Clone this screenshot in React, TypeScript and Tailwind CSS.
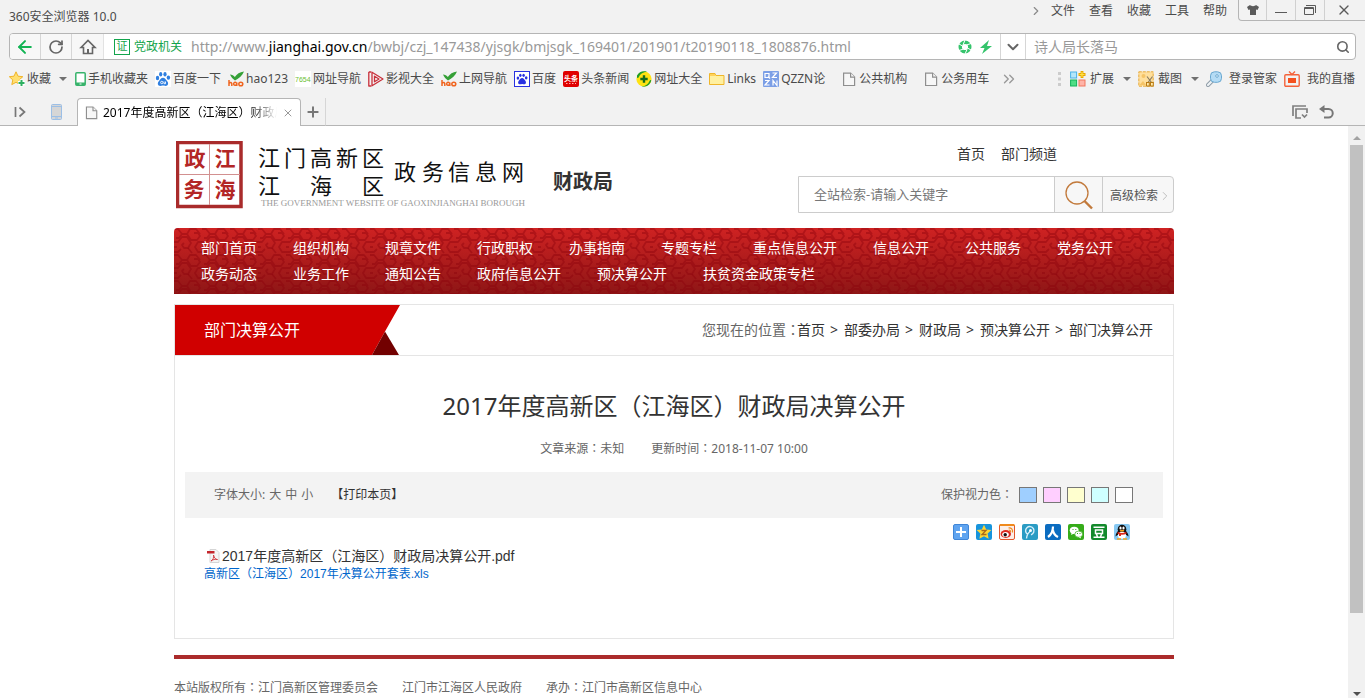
import React from "react";
import {
  ArrowLeft,
  ChevronDown,
  ChevronRight,
  ChevronsRight,
  Plus,
  RotateCw,
  Search,
  X,
} from "lucide-react";

type IconProps = { className?: string };

/* Full-width brackets and colons are centred in their cell, as in the TC face. */
function Cjk({ children }: { children: string }) {
  return (
    <>
      {children.split(/([（）：])/).map((part, i) =>
        i % 2 === 1 ? (
          <span key={i} lang="zh-TW" className="font-['Noto_Sans_CJK_TC',sans-serif] leading-none">{part}</span>
        ) : (
          part
        ),
      )}
    </>
  );
}

/* ---------- browser icons ---------- */

const DocIcon = ({ className = "h-4 w-4" }: IconProps) => (
  <svg viewBox="0 0 16 16" className={className} fill="#f7f7f7" stroke="#8f8f8f" strokeWidth="1.2">
    <path d="M2.6 2.1h7l4 4v8.4h-11z" />
    <path d="M9.6 2.1v4h4" />
  </svg>
);

const HomeIcon = () => (
  <svg viewBox="0 0 18 18" className="h-[18px] w-[18px]" fill="none" stroke="#666" strokeWidth="1.6">
    <path d="M2 9.500 9 2.500l7 7h-2.500V15.500h-9V9.500z" strokeLinejoin="miter" />
    <path d="M9 11v4" strokeWidth="2" />
  </svg>
);

const StarIcon = () => (
  <svg viewBox="0 0 16 16" className="h-4 w-4">
    <path d="m7 .8 2 4.400 4.800.5-3.600 3.200 1 4.700L7 11.300l-4.200 2.300 1-4.700L.3 5.700 5 5.200z" fill="#ffdf70" stroke="#f0b428" />
    <path d="M12.500 8.500v7M9 12h7" stroke="#fff" strokeWidth="4" />
    <path d="M12.500 9v6M9.500 12h6" stroke="#2eb062" strokeWidth="2" />
  </svg>
);

const PhoneIcon = () => (
  <svg viewBox="0 0 11 16" className="h-4 w-[11px]">
    <rect x=".8" y="1.800" width="9.400" height="12.500" rx="1" fill="#fff" stroke="#37b36b" strokeWidth="1.500" />
    <path d="M1 11.500h9V14H1z" fill="#37b36b" />
    <path d="M4.500 13h2" stroke="#fff" />
  </svg>
);

const Paw = () => (
  <>
    <ellipse cx="2.500" cy="7" rx="1.700" ry="2.200" />
    <ellipse cx="5.700" cy="3.300" rx="1.600" ry="2.200" />
    <ellipse cx="10" cy="3.300" rx="1.600" ry="2.200" />
    <ellipse cx="13.400" cy="6.600" rx="1.700" ry="2.200" />
    <path d="M8 6.800c2 0 2.500 1.800 4 3.200 1.800 1.700 1.500 5-1.500 5-1.200 0-1.500-.4-2.500-.4s-1.500.4-2.600.4c-3 0-3.200-3.300-1.400-5 1.500-1.400 2-3.200 4-3.200z" />
  </>
);

const BaiduIcon = () => (
  <svg viewBox="0 0 16 16" className="h-4 w-4" fill="#2f7fe0">
    <path d="M0 0h16v16H0z" fill="#fff" />
    <Paw />
    <circle cx="6.800" cy="11.500" r="1.200" fill="none" stroke="#fff" strokeWidth=".9" />
    <path d="M9 10.500v2.200h1.500v-2.200" fill="none" stroke="#fff" strokeWidth=".9" />
  </svg>
);

const BaiduBoxIcon = () => (
  <svg viewBox="0 0 16 16" className="h-4 w-4" fill="#2932e1">
    <rect x=".5" y=".5" width="15" height="15" fill="#fff" stroke="#2932e1" />
    <g transform="translate(2 1.800) scale(.76)">
      <Paw />
    </g>
  </svg>
);

const HaoIcon = () => (
  <svg viewBox="0 0 16 16" className="h-4 w-4">
    <path d="M2 3.500c2 0 3.800 1 4.800 2.500C9 3 11.500 1 16 .5 14.500 4.500 11 7.500 7 9.500 5 8 3 6 2 3.500z" fill="#35a037" />
    <path d="M1 9v6M1 12.200q2.500-1.800 2.800.6V15M8.800 11.500v3.500M8.600 13.200a1.500 1.500 0 1 0-2.900 0 1.500 1.500 0 0 0 2.900 0M14.800 13a2 1.800 0 1 0-4 0 2 1.800 0 0 0 4 0" fill="none" stroke="#f0641e" strokeWidth="1.500" />
  </svg>
);

const NumIcon = () => (
  <svg viewBox="0 0 16 16" className="h-4 w-4">
    <path d="M0 0h16v16H0z" fill="#fff" />
    <text x="0" y="11" fontSize="7" fontFamily="Liberation Sans, sans-serif" fill="#6cc030">7654</text>
  </svg>
);

const PlayIcon = () => (
  <svg viewBox="0 0 16 16" className="h-4 w-4" fill="none" stroke="#c9303b" strokeWidth="1.300" strokeLinejoin="round">
    <path d="M.8 1v14h2.500M.8 1h2.500" />
    <path d="M4 1.200 15 8 4 14.800z" />
    <path d="M6.500 5.200v5.600L11 8z" />
  </svg>
);

const ToutiaoIcon = () => (
  <svg viewBox="0 0 16 16" className="h-4 w-4">
    <rect width="16" height="16" rx="2" fill="#e00000" />
    <text x="1" y="9.500" fontSize="7" fontWeight="700" fontFamily="Noto Sans CJK SC, sans-serif" fill="#fff">头条</text>
    <path d="M3 12.500h10" stroke="#ffb0b0" strokeDasharray="1.500 1.500" />
  </svg>
);

const SafeIcon = () => (
  <svg viewBox="0 0 16 16" className="h-4 w-4">
    <circle cx="8" cy="8" r="7.600" fill="#ffe312" />
    <path d="M1 4.500C3 1 7-.5 11 .8 7.500 1 4 3 2.500 6.500 2 7.500.8 7.500 1 4.500zM15.200 9.500c-.8 4-5 7-9.500 6 4-.3 6.500-2.200 7.800-5.500.5-1 1.500-1.500 1.700-.5z" fill="#1e9c28" />
    <path d="M8 4.300v7.400M4.300 8h7.400" stroke="#146b1c" strokeWidth="2.400" />
  </svg>
);

const FolderIcon = () => (
  <svg viewBox="0 0 16 16" className="h-4 w-4">
    <path d="M.5 13.500v-11h5.500l1 2h8v9z" fill="#fff0a0" stroke="#efb62a" />
    <path d="M1 3h5l1 2H1z" fill="#ffd25a" />
  </svg>
);

const QzznIcon = () => (
  <svg viewBox="0 0 16 16" className="h-4 w-4">
    <rect width="16" height="16" rx="1" fill="#7c9fe6" />
    <path d="M2 2.500h4v4H2zM5 5.500l2 2M9.500 2h4l-4 4.500h4.500M2 9.500h4l-4 4.500h4.500M10 14.500V9.500l4 5V9.500" fill="none" stroke="#fff" strokeWidth="1.200" />
  </svg>
);

const ExtIcon = () => (
  <svg viewBox="0 0 16 16" className="h-4 w-4">
    <rect x=".6" y="1" width="6" height="6" fill="#b4e6fa" stroke="#49b2e8" />
    <rect x=".6" y="9" width="6" height="6" fill="#50dd85" stroke="#12b35a" />
    <rect x="9" y="9" width="6" height="6" fill="#ffb4a8" stroke="#f0765e" />
    <path d="M12 0v7M8.500 3.500h7" stroke="#e9a800" strokeWidth="2.800" />
    <path d="M12 1v5M9.500 3.500h5" stroke="#ffe24a" strokeWidth="1.200" />
  </svg>
);

const ShotIcon = () => (
  <svg viewBox="0 0 16 16" className="h-4 w-4">
    <path d="M.8.800h14.400v14.400H.8z" fill="#ffdf9c" stroke="#e8ac3c" strokeDasharray="3 1" />
    <circle cx="5.500" cy="5" r="2" fill="#f5c468" />
    <path d="M1.500 14l3.500-4 3 4z" fill="#f5c468" />
    <path d="M9 5.500l4.500 6M14.500 5.500l-4.500 6" stroke="#8c7d60" strokeWidth="1.200" />
    <rect x="8.500" y="11.500" width="2.800" height="3.500" fill="#ffe9ac" stroke="#b87a12" />
    <rect x="12.500" y="11.500" width="2.800" height="3.500" fill="#ffe9ac" stroke="#b87a12" />
  </svg>
);

const KeyIcon = () => (
  <svg viewBox="0 0 16 16" className="h-4 w-4">
    <path d="M7 9 2 14" stroke="#8d9aa5" strokeWidth="4" strokeLinecap="round" />
    <path d="M7 9 2 14" stroke="#eef2f5" strokeWidth="2.200" strokeLinecap="round" />
    <rect x="4.500" y=".8" width="11" height="10.500" rx="4" fill="#b5dcf5" stroke="#6aa8d0" />
    <circle cx="11" cy="5" r="1.300" fill="#fff" stroke="#6aa8d0" />
  </svg>
);

const LiveIcon = () => (
  <svg viewBox="0 0 16 16" className="h-4 w-4" fill="none" stroke="#f4623a" strokeWidth="1.400">
    <path d="M5 .5 8 3.500l3-3" />
    <rect x=".8" y="3.700" width="14.400" height="11.500" rx="1" />
    <path d="M4 7h8v5H4z" fill="#f4511e" stroke="none" />
  </svg>
);

const Caret = () => (
  <svg viewBox="0 0 8 4" className="h-1 w-2" fill="#707070">
    <path d="M0 0h8L4 4z" />
  </svg>
);

/* ---------- share icons ---------- */

const shareIcons: { name: string; art: React.ReactNode }[] = [
  {
    name: "更多分享",
    art: (
      <>
        <rect x=".5" y=".5" width="15" height="15" rx="1.500" fill="#5fa4f0" stroke="#3f86d8" />
        <path d="M8 3v10M3 8h10" stroke="#fff" strokeWidth="2" />
      </>
    ),
  },
  {
    name: "QQ空间",
    art: (
      <>
        <rect width="16" height="16" rx="2" fill="#1794dc" />
        <path d="m8 .8 2.200 4.700 5.200.6-3.800 3.500 1 5.200L8 12.300l-4.600 2.500 1-5.200L.6 6.100l5.200-.6z" fill="#ffd633" />
        <path d="M5.500 6.500H10l-4 4h4.500" fill="none" stroke="#a8691a" strokeWidth="1.300" />
      </>
    ),
  },
  {
    name: "新浪微博",
    art: (
      <>
        <rect x=".5" y=".5" width="15" height="15" rx="1.500" fill="#fbeee8" stroke="#e2572c" />
        <path d="M0 2a2 2 0 0 1 2-2h12a2 2 0 0 1 2 2H0z" fill="#f08a1c" />
        <ellipse cx="6.800" cy="10" rx="5.200" ry="3.900" fill="#dd2a20" />
        <ellipse cx="6.500" cy="10.500" rx="3.300" ry="2.500" fill="#fff" />
        <circle cx="6.200" cy="10.700" r="1.700" fill="#111" />
        <path d="M9.500 4c2.800-.5 4.500 1.500 4 4.500M9.800 6c1.300 0 2 .8 1.700 2" fill="none" stroke="#f08a1c" strokeWidth="1.200" />
      </>
    ),
  },
  {
    name: "腾讯微博",
    art: (
      <>
        <rect width="16" height="16" rx="2" fill="#2b9cc4" />
        <path d="M5.500 10.300A4.200 4.200 0 1 1 9 10.800M4.500 14.500c.3-3.500 1.500-5.500 3.800-7.200" fill="none" stroke="#d8f0fa" strokeWidth="1.400" />
        <circle cx="8.500" cy="6.600" r="1.500" fill="#fff" />
      </>
    ),
  },
  {
    name: "人人网",
    art: (
      <>
        <rect width="16" height="16" rx="2" fill="#0b6cc0" />
        <path d="M8 2.500c0 5-1.500 8-5 10.500M8 6.500c.5 3 2 5 5 6.500" fill="none" stroke="#fff" strokeWidth="2.200" />
      </>
    ),
  },
  {
    name: "微信",
    art: (
      <>
        <rect width="16" height="16" rx="2" fill="#35ac19" />
        <ellipse cx="6.200" cy="6.300" rx="4.400" ry="3.600" fill="#fff" />
        <ellipse cx="10.700" cy="10.200" rx="3.900" ry="3.100" fill="#fff" stroke="#35ac19" strokeWidth=".7" />
        <path d="M3 11l1-3 2 1.500zM13 14.500l-.5-2-2 .5z" fill="#fff" />
        <path d="M4.500 5.500h1M7.300 5.500h1M9 9.500h1M11.500 9.500h1" stroke="#35ac19" strokeWidth="1" />
      </>
    ),
  },
  {
    name: "豆瓣",
    art: (
      <>
        <rect width="16" height="16" rx="2" fill="#138a2c" />
        <path d="M2.500 3.200h11M4.500 6h7v3.500h-7zM5.500 10l1 3M10.500 10l-1 3M2.500 13.300h11" fill="none" stroke="#fff" strokeWidth="1.500" />
      </>
    ),
  },
  {
    name: "QQ好友",
    art: (
      <>
        <rect width="16" height="16" rx="2" fill="#86c8f2" />
        <path d="M1.500 12.500c0-2.500 1.500-4.500 2.500-5.500h8c1 1 2.500 3 2.500 5.500L12.500 11h-9z" fill="#111" />
        <ellipse cx="8" cy="5.300" rx="4.300" ry="4.600" fill="#111" />
        <ellipse cx="8" cy="11.200" rx="4" ry="3.500" fill="#fff" />
        <path d="M3.600 7.800c2.600 1.600 6.200 1.600 8.800 0v2c-2.600 1.200-6.200 1.200-8.800 0z" fill="#e02818" />
        <path d="M5 9.500h2v2.500H5z" fill="#e02818" />
        <ellipse cx="6.500" cy="4" rx="1.100" ry="1.500" fill="#fff" />
        <ellipse cx="9.500" cy="4" rx="1.100" ry="1.500" fill="#fff" />
        <ellipse cx="8" cy="6.700" rx="2.300" ry=".9" fill="#f8a51c" />
        <path d="M3 15h4M9 15h4" stroke="#f8a51c" strokeWidth="1.400" />
      </>
    ),
  },
];

/* ---------- data ---------- */

const bookmarks: { label: string; icon: React.ReactNode; extra?: string }[] = [
  { label: "手机收藏夹", icon: <PhoneIcon /> },
  { label: "百度一下", icon: <BaiduIcon /> },
  { label: "hao123", icon: <HaoIcon /> },
  { label: "网址导航", icon: <NumIcon /> },
  { label: "影视大全", icon: <PlayIcon /> },
  { label: "上网导航", icon: <HaoIcon /> },
  { label: "百度", icon: <BaiduBoxIcon /> },
  { label: "头条新闻", icon: <ToutiaoIcon /> },
  { label: "网址大全", icon: <SafeIcon /> },
  { label: "Links", icon: <FolderIcon /> },
  { label: "QZZN论", icon: <QzznIcon /> },
  { label: "公共机构", icon: <DocIcon />, extra: "ml-[9px]" },
  { label: "公务用车", icon: <DocIcon />, extra: "ml-[9px]" },
];

const navItems = [
  "部门首页", "组织机构", "规章文件", "行政职权", "办事指南", "专题专栏",
  "重点信息公开", "信息公开", "公共服务", "党务公开", "政务动态", "业务工作",
  "通知公告", "政府信息公开", "预决算公开", "扶贫资金政策专栏",
];

const crumbs = ["首页", "部委办局", "财政局", "预决算公开", "部门决算公开"];

const eyeColors = [
  { name: "蓝色", cls: "bg-[#9fcfff]" },
  { name: "粉色", cls: "bg-[#ffcfff]" },
  { name: "黄色", cls: "bg-[#ffffcf]" },
  { name: "青色", cls: "bg-[#cfffff]" },
  { name: "白色", cls: "bg-white" },
];

/* ---------- browser chrome ---------- */

function TitleBar() {
  return (
    <div className="flex h-[33px] items-start justify-between text-xs text-[#4a4a4a]">
      <span className="pt-[9px] pl-[9px]">360安全浏览器 10.0</span>
      <div className="flex items-start">
        <div className="flex h-[22px] items-center gap-[14px] pr-[11px]">
          <ChevronRight className="-mr-[6px] h-[14px] w-[14px] text-[#8a8a8a]" />
          {["文件", "查看", "收藏", "工具", "帮助"].map((m) => (
            <button key={m}>{m}</button>
          ))}
        </div>
        <div className="flex h-[21px] divide-x divide-[#d0d0d0] rounded-bl-sm border-b border-l border-[#b5b5b5]">
          <button aria-label="皮肤" className="flex w-7 items-center justify-center">
            <svg viewBox="0 0 12 10" className="h-[10px] w-3" fill="#5a5a5a">
              <path d="M3 0c1 1.500 5 1.500 6 0l3 2-1.500 3L9 4.500V10H3V4.500L1.500 5 0 2z" />
            </svg>
          </button>
          <button aria-label="最小化" className="flex w-[29px] items-center justify-center">
            <svg viewBox="0 0 12 10" className="h-[10px] w-3" stroke="#5a5a5a"><path d="M0 7.500h12" /></svg>
          </button>
          <button aria-label="还原" className="flex w-[29px] items-center justify-center">
            <svg viewBox="0 0 12 10" className="h-[10px] w-3" fill="none" stroke="#5a5a5a">
              <path d="M2 .5h9.500V8M.5 2.500h9v7h-9zM.5 3.500h9" />
            </svg>
          </button>
          <button aria-label="关闭" className="flex w-10 items-center justify-center pr-[2px]">
            <X className="h-4 w-4 text-[#5a5a5a]" strokeWidth={2} />
          </button>
        </div>
      </div>
    </div>
  );
}

function AddressBar() {
  return (
    <div className="mx-[9px] flex h-[27px] items-stretch overflow-hidden rounded-sm border border-[#b5b5b5] bg-white">
      <div className="flex divide-x divide-[#d6d6d6] bg-[#f7f7f7]">
        <button aria-label="后退" className="flex w-[31px] items-center justify-center">
          <ArrowLeft className="h-5 w-5 text-[#12b454]" strokeWidth={2.4} />
        </button>
        <button aria-label="刷新" className="flex w-[31px] items-center justify-center">
          <RotateCw className="h-4 w-4 text-[#666]" strokeWidth={2.6} />
        </button>
        <button aria-label="主页" className="flex w-[31px] items-center justify-center">
          <HomeIcon />
        </button>
      </div>
      <div className="flex flex-1 items-center border-l border-[#e2e2e2] pl-[10px]">
        <span className="flex h-4 w-4 items-center justify-center border border-[#12a44c] text-[11px] text-[#12a44c]">证</span>
        <span className="ml-1 text-xs text-[#12a44c]">党政机关</span>
        <div role="textbox" aria-label="地址" className="ml-[9px] flex-1 text-sm whitespace-nowrap text-[#999]">
          http://www.<span className="text-black">jianghai.gov.cn</span>
          /bwbj/czj_147438/yjsgk/bmjsgk_169401/201901/t20190118_1808876.html
        </div>
        <div className="flex items-center gap-2 pr-2">
          <svg viewBox="0 0 14 14" className="h-[14px] w-[14px]" fill="none" stroke="#35c46c">
            <circle cx="7" cy="7" r="4.800" strokeWidth="3.400" />
            <path d="M7 0 5 5M13 3.500 8.500 5M13 10 9.500 8M7 14l2-4.500M1 10.500l4.500-1.500M1 4l3.500 2" stroke="#fff" strokeWidth="1" />
          </svg>
          <svg viewBox="0 0 12 14" className="h-[14px] w-3" fill="#35c46c">
            <path d="M9 0 0 8h4.500L2 14l10-8H7z" />
          </svg>
        </div>
      </div>
      <button aria-label="历史记录" className="flex w-[26px] items-center justify-center border-x border-[#d6d6d6]">
        <ChevronDown className="h-[18px] w-[18px] text-[#666]" strokeWidth={2.6} />
      </button>
      <div className="flex w-[329px] items-center pr-[5px] pl-2">
        <input aria-label="搜索" placeholder="诗人局长落马" className="min-w-0 flex-1 text-sm outline-none placeholder:text-[#999]" />
        <button aria-label="搜索网页">
          <Search className="h-[14px] w-[14px] text-[#666]" strokeWidth={2.8} />
        </button>
      </div>
    </div>
  );
}

function BookmarkBar() {
  return (
    <div className="flex h-[38px] items-center justify-between pr-[10px] pl-[9px] text-xs whitespace-nowrap text-[#4a4a4a]">
      <div className="flex items-center gap-[7px]">
        <button className="flex items-center gap-[2px]">
          <StarIcon />
          收藏
        </button>
        <button aria-label="展开收藏" className="px-[1px]"><Caret /></button>
        {bookmarks.map((b) => (
          <a key={b.label} href="#" className={`flex items-center gap-[2px] ${b.extra ?? ""}`}>
            {b.icon}
            {b.label}
          </a>
        ))}
        <button aria-label="更多书签" className="ml-1">
          <ChevronsRight className="h-[18px] w-[18px] text-[#999]" strokeWidth={1.8} />
        </button>
      </div>
      <div className="flex items-center gap-[7px]">
        <svg viewBox="0 0 4 14" className="mr-[1px] h-[14px] w-1" fill="#ccc">
          <path d="M0 0h3v3H0zM0 5.500h3v3H0zM0 11h3v3H0z" />
        </svg>
        <button className="flex items-center gap-1"><ExtIcon />扩展</button>
        <button aria-label="展开扩展" className="pl-[2px]"><Caret /></button>
        <button className="flex items-center gap-1"><ShotIcon />截图</button>
        <button aria-label="展开截图" className="pl-[2px]"><Caret /></button>
        <button className="flex items-center gap-[7px]"><KeyIcon />登录管家</button>
        <button className="flex items-center gap-[7px]"><LiveIcon />我的直播</button>
      </div>
    </div>
  );
}

function TabBar() {
  return (
    <div className="flex h-7 items-stretch text-xs">
      <div className="flex w-[77px] items-center border-b border-[#b5b5b5] pl-[14px]">
        <svg viewBox="0 0 12 12" className="h-3 w-3" fill="none" stroke="#777" strokeWidth="1.700">
          <path d="M1.500 1v10M5.500 1.500 10.500 6l-5 4.500" />
        </svg>
        <svg viewBox="0 0 11 16" className="ml-[25px] h-4 w-[11px]" fill="#d6d6d6" stroke="#9cbfe6">
          <rect x=".5" y=".5" width="10" height="15" rx="1" />
          <path d="M.5 2.500h10M.5 12.500h10M4 14h3" />
        </svg>
      </div>
      <div className="flex w-56 items-center rounded-t border border-b-0 border-[#b5b5b5] bg-white px-[6px]">
        <DocIcon className="h-[15px] w-[15px] shrink-0" />
        <span className="ml-1 flex-1 overflow-hidden [mask-image:linear-gradient(to_right,black_84%,transparent)] whitespace-nowrap text-black">
          <Cjk>2017年度高新区（江海区）财政局</Cjk>
        </span>
        <button aria-label="关闭标签页" className="ml-[5px]"><X className="h-3 w-3 text-[#999]" strokeWidth={2} /></button>
      </div>
      <button aria-label="新建标签页" className="flex w-[25px] items-center justify-center border-r border-b border-r-[#d6d6d6] border-b-[#b5b5b5]">
        <Plus className="h-4 w-4 text-[#777]" strokeWidth={3} />
      </button>
      <div className="flex flex-1 items-center justify-end gap-[11px] border-b border-[#b5b5b5] pr-[31px]">
        <button aria-label="标签列表">
          <svg viewBox="0 0 16 14" className="h-[14px] w-4" fill="none" stroke="#808080" strokeWidth="1.700">
            <path d="M1 11V1h13M9 13H4V4h11v4" />
            <path d="m10 9.500 2.500 2.500L15 9.500" />
          </svg>
        </button>
        <button aria-label="恢复标签页">
          <svg viewBox="0 0 15 14" className="h-[14px] w-[15px]" fill="none" stroke="#777" strokeWidth="2">
            <path d="M3 4h6.500a4 4 0 0 1 0 8.500H5" />
            <path d="M5.500 0v8L0 4z" fill="#777" stroke="none" />
          </svg>
        </button>
      </div>
    </div>
  );
}

/* ---------- site ---------- */

function SiteLogo() {
  const cjk = "Noto Sans CJK SC, sans-serif";
  return (
    <svg viewBox="0 0 350 68" className="h-[68px] w-[350px]" role="img" aria-label="江门高新区江海区政务信息网">
      <rect x="1.500" y="1.500" width="63.500" height="64" fill="#fff" stroke="#a92b2b" strokeWidth="3.500" />
      <path d="M33.500 3v61M3 33.500h61" stroke="#d29090" />
      <g fill="#b32626" fontFamily={cjk} fontSize="21" fontWeight="700" textAnchor="middle">
        <text x="19" y="25">政</text>
        <text x="49" y="25">江</text>
        <text x="18" y="56">务</text>
        <text x="49" y="56">海</text>
      </g>
      <g fill="#111" fontFamily={cjk} fontSize="22" fontWeight="400" textAnchor="middle">
        <text x="93" y="25">江</text>
        <text x="119" y="25">门</text>
        <text x="145" y="25">高</text>
        <text x="171" y="25">新</text>
        <text x="197" y="25">区</text>
        <text x="93" y="53">江</text>
        <text x="145" y="53">海</text>
        <text x="197" y="53">区</text>
        <text x="229" y="39">政</text>
        <text x="257" y="39">务</text>
        <text x="283" y="39">信</text>
        <text x="310" y="39">息</text>
        <text x="337" y="39">网</text>
      </g>
      <text x="85" y="65" fontSize="9" fontFamily="Liberation Serif, serif" fill="#999">
        THE GOVERNMENT WEBSITE OF GAOXINJIANGHAI BOROUGH
      </text>
    </svg>
  );
}

function SiteHeader() {
  return (
    <header className="flex h-[102px] justify-between">
      <div className="flex items-start pt-[15px] pl-[2px]">
        <SiteLogo />
        <h1 className="ml-[27px] pt-[26px] text-xl leading-[30px] font-bold text-[#333]">财政局</h1>
      </div>
      <div className="flex w-[376px] flex-col pt-[18px]">
        <div className="flex justify-end gap-4 pr-[117px] text-sm text-[#333]">
          <a href="#">首页</a>
          <a href="#">部门频道</a>
        </div>
        <form className="mt-3 flex h-[37px] rounded-r-sm border border-[#ccc] bg-[#f7f7f7]" onSubmit={(e) => e.preventDefault()}>
          <input
            aria-label="全站检索"
            placeholder="全站检索-请输入关键字"
            className="min-w-0 flex-1 bg-white pl-[15px] text-[13px] outline-none placeholder:text-[#777]"
          />
          <button aria-label="检索" className="flex w-[49px] items-center justify-center border-x border-[#ccc]">
            <svg viewBox="0 0 30 30" className="h-[30px] w-[30px]" fill="none" stroke="#c27a3c">
              <circle cx="13" cy="13" r="11" strokeWidth="1.300" />
              <path d="m20.500 21 7.500 7.500" strokeWidth="2.400" />
            </svg>
          </button>
          <a href="#" className="flex w-[70px] items-center pt-[2px] pl-[7px] text-xs text-[#555]">
            高级检索
            <ChevronRight className="h-[14px] w-[14px] text-[#b5b5b5]" strokeWidth={1.5} />
          </a>
        </form>
      </div>
    </header>
  );
}

function SiteNav() {
  return (
    <nav className="relative overflow-hidden rounded-t bg-linear-to-b from-[#cf2222] to-[#8e1616] py-[7px] pr-5 pl-[27px]">
      <svg className="absolute inset-0 h-full w-full" aria-hidden="true">
        <defs>
          <pattern id="swirl" width="28" height="26" patternUnits="userSpaceOnUse">
            <g fill="none" stroke="#8a000a" strokeOpacity=".4" strokeWidth="1.800" strokeLinejoin="round">
              <path d="M0 1h4l4 5-3 4H2M8 6h5l3-5h6l4 5M13 6l4 6h6l3-4-2-3h-4" />
              <path d="M0 14h4l4-5h5l4 6-3 5h-4l-2-3 2-2" />
              <path d="M28 14h-4l-3 5 3 5h4M0 24h4l3-3M14 20l4 5M0 19h3" />
            </g>
          </pattern>
        </defs>
        <rect width="100%" height="100%" fill="url(#swirl)" />
      </svg>
      <ul className="relative flex flex-wrap gap-x-9 text-sm leading-[26px] text-white">
        {navItems.map((n) => (
          <li key={n}><a href="#">{n}</a></li>
        ))}
      </ul>
    </nav>
  );
}

function Article() {
  return (
    <section className="mt-[10px] border border-[#e5e5e5]">
      <div className="flex h-[51px] items-stretch justify-between border-b border-[#e5e5e5]">
        <h2 className="relative flex w-[225px] items-center pl-[29px] text-base text-white">
          <svg viewBox="0 0 225 50" className="absolute inset-0 h-[50px] w-[225px]" aria-hidden="true">
            <path d="M0 0h225l-15 26.500L197 50H0z" fill="#d00000" />
            <path d="m197 50 13-23.500L224 50z" fill="#720000" />
          </svg>
          <span className="relative">部门决算公开</span>
        </h2>
        <div className="flex items-center gap-[5px] pr-5 text-sm text-[#333]">
          <span className="-mr-2 text-[#666]"><Cjk>您现在的位置：</Cjk></span>
          {crumbs.map((c, i) => (
            <React.Fragment key={c}>
              {i > 0 && <span className="w-[9px]">&gt;</span>}
              <a href="#">{c}</a>
            </React.Fragment>
          ))}
        </div>
      </div>

      <div className="px-[10px] pt-8 pb-[55px]">
        <h3 className="text-center text-2xl leading-9 text-[#333]"><Cjk>2017年度高新区（江海区）财政局决算公开</Cjk></h3>
        <div className="mt-4 flex justify-center gap-[27px] text-xs leading-[18px] text-[#666]">
          <span><Cjk>文章来源：未知</Cjk></span>
          <span><Cjk>更新时间：2018-11-07 10:00</Cjk></span>
        </div>

        <div className="mt-[14px] flex h-[46px] items-center justify-between bg-[#f3f3f3] pr-[30px] pl-[29px] text-xs text-[#666]">
          <div className="flex items-center gap-1">
            <span>字体大小:</span>
            <button>大</button>
            <button>中</button>
            <button>小</button>
            <button className="ml-[14px] text-[#333]">【打印本页】</button>
          </div>
          <div className="flex items-center gap-[6px]">
            <span><Cjk>保护视力色：</Cjk></span>
            {eyeColors.map((c) => (
              <button key={c.name} aria-label={c.name} className={`h-4 w-[18px] border border-[#777] ${c.cls}`} />
            ))}
          </div>
        </div>

        <div className="mt-[6px] flex justify-end gap-[7px] pr-[33px]">
          {shareIcons.map((s) => (
            <a key={s.name} href="#" aria-label={s.name}>
              <svg viewBox="0 0 16 16" className="h-4 w-4">{s.art}</svg>
            </a>
          ))}
        </div>

        <div className="mt-[7px] pl-[19px] font-['Liberation_Sans','Noto_Sans_CJK_SC',sans-serif]">
          <p className="flex items-center gap-[2px] pl-[2px] text-sm leading-[18px] text-[#333]">
            <svg viewBox="0 0 14 14" className="h-[14px] w-[14px]">
              <path d="M4 .5h6l3 3v10H4z" fill="#f4f4f4" stroke="#d5d5d5" />
              <path d="M1 2h7.500v2.500H1z" fill="#c4262c" />
              <path d="M5 12c2-1 3-3.500 2.500-6 .8 3 2 4.500 4 4.500-2.500-.5-4.500 0-6.500 1.500z" fill="none" stroke="#d0353b" strokeWidth=".9" />
            </svg>
            <a href="#"><Cjk>2017年度高新区（江海区）财政局决算公开.pdf</Cjk></a>
          </p>
          <p className="text-xs leading-[18px] text-[#0066cc]"><a href="#"><Cjk>高新区（江海区）2017年决算公开套表.xls</Cjk></a></p>
        </div>
      </div>
    </section>
  );
}

function ScrollBar() {
  return (
    <div className="flex w-[17px] shrink-0 flex-col bg-[#f1f1f1] px-[2px]" aria-hidden="true">
      <div className="flex h-[19px] items-center justify-center pt-1">
        <svg viewBox="0 0 8 4" className="h-1 w-2" fill="#a3a3a3"><path d="M0 4h8L4 0z" /></svg>
      </div>
      <div className="flex-[468] bg-[#c1c1c1]" />
      <div className="flex-[68]" />
      <div className="flex h-[17px] items-center justify-center pt-2">
        <svg viewBox="0 0 8 4" className="h-1 w-2" fill="#505050"><path d="M0 0h8L4 4z" /></svg>
      </div>
    </div>
  );
}

export default function App() {
  return (
    <div className="flex h-screen flex-col overflow-hidden bg-white font-['Noto_Sans','Noto_Sans_CJK_SC',sans-serif]">
      <div className="shrink-0 bg-[#f2f2f2]">
        <TitleBar />
        <AddressBar />
        <BookmarkBar />
        <TabBar />
      </div>
      <div className="flex min-h-0 flex-1">
        <main className="min-w-0 flex-1 overflow-hidden">
          <div className="mx-auto max-w-[1000px]">
            <SiteHeader />
            <SiteNav />
            <Article />
            <footer className="mt-4 border-t-4 border-[#ab2b2b] pt-5">
              <div className="flex gap-6 text-xs leading-[18px] text-[#666]">
                <span><Cjk>本站版权所有：江门高新区管理委员会</Cjk></span>
                <span>江门市江海区人民政府</span>
                <span><Cjk>承办：江门市高新区信息中心</Cjk></span>
              </div>
            </footer>
          </div>
        </main>
        <ScrollBar />
      </div>
    </div>
  );
}
